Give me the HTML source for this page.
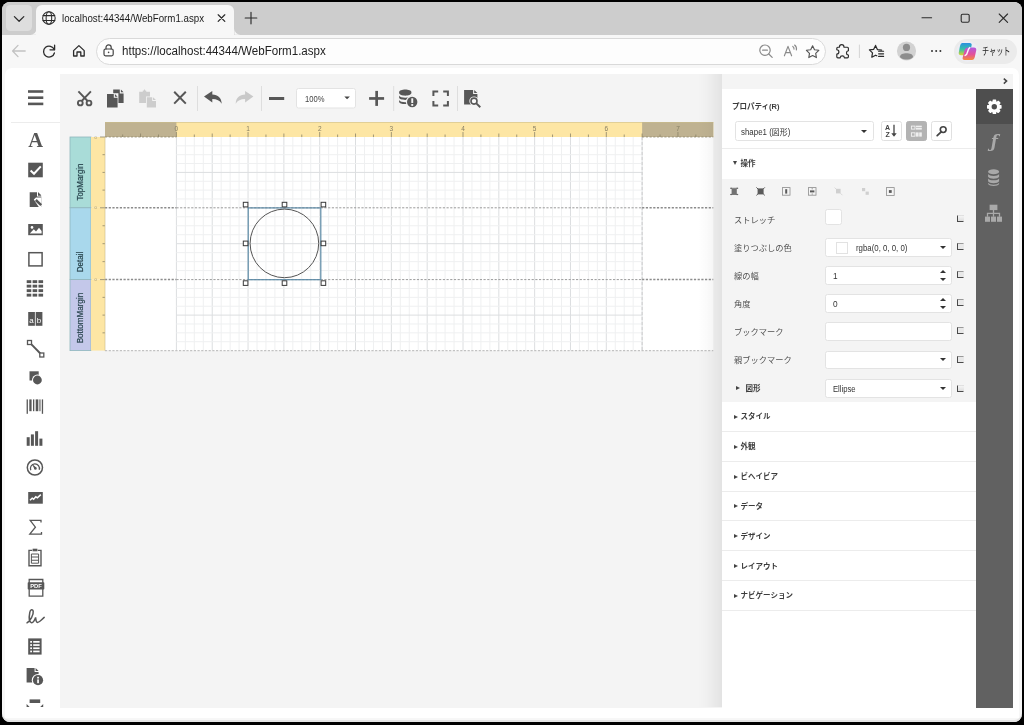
<!DOCTYPE html>
<html lang="ja">
<head>
<meta charset="utf-8">
<title>localhost:44344/WebForm1.aspx</title>
<style>
*{box-sizing:border-box;margin:0;padding:0}
html,body{width:1024px;height:725px;overflow:hidden;background:#000}
body{font-family:"Liberation Sans","Noto Sans CJK JP",sans-serif;color:#333;position:relative}
#win{position:absolute;left:2.4px;top:2.2px;width:1019.3px;height:719.5px;background:#f7f7f7;border-radius:8px;overflow:hidden;box-shadow:inset 0 -2px 0 #e4e4e4}
#stage{position:absolute;left:0;top:0;width:1024px;height:725px;overflow:hidden;will-change:transform;transform:translateZ(0)}
#stage *{position:absolute}
#stage svg *{position:static}
.t{white-space:nowrap;transform-origin:0 50%}
/* browser chrome */
#tabbar{left:2px;top:2px;width:1020px;height:32.7px;background:#cdcdcd;border-radius:8px 8px 0 0}
#tabdd{left:5.7px;top:4.8px;width:26.7px;height:26.2px;border-radius:4.5px;background:#dedede}
#tab{left:36px;top:5px;width:198.4px;height:29.8px;background:#f7f7f7;border-radius:6px 6px 0 0}
#tabtitle{left:62px;top:11px;font-size:11px;line-height:14px;color:#1b1b1b;transform:scaleX(.885)}
#addr{left:95.6px;top:38px;width:730px;height:27px;border-radius:13.5px;background:#fdfdfd;border:1px solid #d9d9d9}
#url{left:121.5px;top:44px;font-size:12px;line-height:14px;color:#222;transform:scaleX(.965)}
#chat{left:953.6px;top:39px;width:63.2px;height:24.8px;border-radius:12.4px;background:#ebebeb}
#chatt{left:982.2px;top:43.9px;font-size:10.5px;line-height:14px;color:#222;transform:scaleX(.68)}
/* page */
#page{left:5px;top:68px;width:1014px;height:650px;background:#fff;border-radius:7px 7px 0 0}
#main{left:59.6px;top:74px;width:662.4px;height:633.5px;background:#f4f4f4}
#lsep{left:11px;top:121.9px;width:49px;height:1px;background:#ececec}

.hb{font-size:7.5px;font-weight:bold;line-height:12px;color:#3c3c3c}
.lb{font-size:8.25px;line-height:12px;color:#505050}
.tx{font-size:8.25px;line-height:10px;color:#333}
.inp{background:#fff;border:1px solid #e3e3e3;border-radius:2.5px}
.btn{background:#fff;border:1px solid #e0e0e0;border-radius:2.5px}
.hl{height:1px;background:#ececec}
.arr{width:0;height:0;border-left:3.1px solid transparent;border-right:3.1px solid transparent;border-top:3.3px solid #333}
.arr.up{border-top:none;border-bottom:3.3px solid #333}
.tri.rt{width:0;height:0;border-top:2.6px solid transparent;border-bottom:2.6px solid transparent;border-left:4.2px solid #444}
.tri.dn{width:0;height:0;border-left:2.6px solid transparent;border-right:2.6px solid transparent;border-top:4.2px solid #444}
.mk{width:7px;height:7px;border:1px solid #4a4a4a;border-right-color:transparent;border-top-color:#999;background:#e8e8e8}
</style>
</head>
<body>
<div id="win"></div>
<div id="stage">
  <div id="tabbar"></div>
  <div id="tabdd"></div>
  <div id="tab"></div>
  <div id="tabtitle" class="t">localhost:44344/WebForm1.aspx</div>
  <div id="addr"></div>
  <div id="url" class="t">https://localhost:44344/WebForm1.aspx</div>
  <div id="chat"></div>
  <div id="chatt" class="t">チャット</div>
  <div id="page"></div>
  <div id="main"></div>
  <div id="lsep"></div>
  <!--DESIGNER-->
<svg id="dsg" width="1024" height="725" viewBox="0 0 1024 725" style="left:0;top:0">
<rect x="105.0" y="137.0" width="608.30" height="213.60" fill="#fff"/>
<g stroke-width="1"><path d="M176.40 137.0V350.60" stroke="#dcdee0"/><path d="M185.36 137.0V350.60" stroke="#eff0f1"/><path d="M194.31 137.0V350.60" stroke="#eff0f1"/><path d="M203.27 137.0V350.60" stroke="#eff0f1"/><path d="M212.23 137.0V350.60" stroke="#dcdee0"/><path d="M221.18 137.0V350.60" stroke="#eff0f1"/><path d="M230.14 137.0V350.60" stroke="#eff0f1"/><path d="M239.09 137.0V350.60" stroke="#eff0f1"/><path d="M248.05 137.0V350.60" stroke="#dcdee0"/><path d="M257.01 137.0V350.60" stroke="#eff0f1"/><path d="M265.96 137.0V350.60" stroke="#eff0f1"/><path d="M274.92 137.0V350.60" stroke="#eff0f1"/><path d="M283.88 137.0V350.60" stroke="#dcdee0"/><path d="M292.83 137.0V350.60" stroke="#eff0f1"/><path d="M301.79 137.0V350.60" stroke="#eff0f1"/><path d="M310.74 137.0V350.60" stroke="#eff0f1"/><path d="M319.70 137.0V350.60" stroke="#dcdee0"/><path d="M328.66 137.0V350.60" stroke="#eff0f1"/><path d="M337.61 137.0V350.60" stroke="#eff0f1"/><path d="M346.57 137.0V350.60" stroke="#eff0f1"/><path d="M355.52 137.0V350.60" stroke="#dcdee0"/><path d="M364.48 137.0V350.60" stroke="#eff0f1"/><path d="M373.44 137.0V350.60" stroke="#eff0f1"/><path d="M382.39 137.0V350.60" stroke="#eff0f1"/><path d="M391.35 137.0V350.60" stroke="#dcdee0"/><path d="M400.31 137.0V350.60" stroke="#eff0f1"/><path d="M409.26 137.0V350.60" stroke="#eff0f1"/><path d="M418.22 137.0V350.60" stroke="#eff0f1"/><path d="M427.18 137.0V350.60" stroke="#dcdee0"/><path d="M436.13 137.0V350.60" stroke="#eff0f1"/><path d="M445.09 137.0V350.60" stroke="#eff0f1"/><path d="M454.04 137.0V350.60" stroke="#eff0f1"/><path d="M463.00 137.0V350.60" stroke="#dcdee0"/><path d="M471.96 137.0V350.60" stroke="#eff0f1"/><path d="M480.91 137.0V350.60" stroke="#eff0f1"/><path d="M489.87 137.0V350.60" stroke="#eff0f1"/><path d="M498.83 137.0V350.60" stroke="#dcdee0"/><path d="M507.78 137.0V350.60" stroke="#eff0f1"/><path d="M516.74 137.0V350.60" stroke="#eff0f1"/><path d="M525.69 137.0V350.60" stroke="#eff0f1"/><path d="M534.65 137.0V350.60" stroke="#dcdee0"/><path d="M543.61 137.0V350.60" stroke="#eff0f1"/><path d="M552.56 137.0V350.60" stroke="#eff0f1"/><path d="M561.52 137.0V350.60" stroke="#eff0f1"/><path d="M570.48 137.0V350.60" stroke="#dcdee0"/><path d="M579.43 137.0V350.60" stroke="#eff0f1"/><path d="M588.39 137.0V350.60" stroke="#eff0f1"/><path d="M597.34 137.0V350.60" stroke="#eff0f1"/><path d="M606.30 137.0V350.60" stroke="#dcdee0"/><path d="M615.26 137.0V350.60" stroke="#eff0f1"/><path d="M624.21 137.0V350.60" stroke="#eff0f1"/><path d="M633.17 137.0V350.60" stroke="#eff0f1"/><path d="M642.12 137.0V350.60" stroke="#dcdee0"/><path d="M176.4 145.85H642.12" stroke="#eff0f1"/><path d="M176.4 154.70H642.12" stroke="#eff0f1"/><path d="M176.4 163.55H642.12" stroke="#eff0f1"/><path d="M176.4 172.40H642.12" stroke="#dcdee0"/><path d="M176.4 181.25H642.12" stroke="#eff0f1"/><path d="M176.4 190.10H642.12" stroke="#eff0f1"/><path d="M176.4 198.95H642.12" stroke="#eff0f1"/><path d="M176.4 216.78H642.12" stroke="#eff0f1"/><path d="M176.4 225.75H642.12" stroke="#eff0f1"/><path d="M176.4 234.73H642.12" stroke="#eff0f1"/><path d="M176.4 243.70H642.12" stroke="#dcdee0"/><path d="M176.4 252.68H642.12" stroke="#eff0f1"/><path d="M176.4 261.65H642.12" stroke="#eff0f1"/><path d="M176.4 270.62H642.12" stroke="#eff0f1"/><path d="M176.4 288.48H642.12" stroke="#eff0f1"/><path d="M176.4 297.35H642.12" stroke="#eff0f1"/><path d="M176.4 306.23H642.12" stroke="#eff0f1"/><path d="M176.4 315.10H642.12" stroke="#dcdee0"/><path d="M176.4 323.98H642.12" stroke="#eff0f1"/><path d="M176.4 332.85H642.12" stroke="#eff0f1"/><path d="M176.4 341.73H642.12" stroke="#eff0f1"/></g>
<path d="M642.12 137.0V350.60" stroke="#cdcdcd" stroke-width="1" stroke-dasharray="3 2"/>
<path d="M105.0 207.80H176.40M642.12 207.80H713.30" stroke="#8c8c8c" stroke-width="1.5" stroke-dasharray="2.2 1.5"/>
<path d="M176.4 207.80H642.12" stroke="#9a9a9a" stroke-width="1" stroke-dasharray="2.2 1.5"/>
<path d="M105.0 279.60H176.40M642.12 279.60H713.30" stroke="#8c8c8c" stroke-width="1.5" stroke-dasharray="2.2 1.5"/>
<path d="M176.4 279.60H642.12" stroke="#9a9a9a" stroke-width="1" stroke-dasharray="2.2 1.5"/>
<path d="M105.0 350.60H713.30" stroke="#c2c2c2" stroke-width="1.2" stroke-dasharray="2.2 1.5"/>
<rect x="105.0" y="122" width="608.30" height="15" fill="#fde6a4"/>
<rect x="105.0" y="122" width="71.40" height="15" fill="#bfb291"/>
<rect x="642.12" y="122" width="71.17" height="15" fill="#bfb291"/>
<path d="M105.0 122.5H713.3" stroke="#cbbd8b" stroke-width="1" opacity=".55"/>
<path d="M105.0 137H176.40M642.12 137H713.3" stroke="#8c8468" stroke-width="1.2" stroke-dasharray="2.2 1.5" opacity=".75"/>
<path d="M122.66 137v-2.5M140.57 137v-3.5M158.49 137v-2.5M176.40 137v-5M194.31 137v-2.5M212.23 137v-3.5M230.14 137v-2.5M248.05 137v-5M265.96 137v-2.5M283.88 137v-3.5M301.79 137v-2.5M319.70 137v-5M337.61 137v-2.5M355.52 137v-3.5M373.44 137v-2.5M391.35 137v-5M409.26 137v-2.5M427.18 137v-3.5M445.09 137v-2.5M463.00 137v-5M480.91 137v-2.5M498.83 137v-3.5M516.74 137v-2.5M534.65 137v-5M552.56 137v-2.5M570.48 137v-3.5M588.39 137v-2.5M606.30 137v-5M624.21 137v-2.5M642.12 137v-3.5M660.04 137v-2.5M677.95 137v-5M695.86 137v-2.5" stroke="#8c8468" stroke-width="1" opacity=".8"/>
<text x="176.4" y="131.2" font-size="6.5" fill="#857d63" text-anchor="middle" font-family="Liberation Sans, sans-serif">0</text>
<text x="248.1" y="131.2" font-size="6.5" fill="#857d63" text-anchor="middle" font-family="Liberation Sans, sans-serif">1</text>
<text x="319.7" y="131.2" font-size="6.5" fill="#857d63" text-anchor="middle" font-family="Liberation Sans, sans-serif">2</text>
<text x="391.4" y="131.2" font-size="6.5" fill="#857d63" text-anchor="middle" font-family="Liberation Sans, sans-serif">3</text>
<text x="463.0" y="131.2" font-size="6.5" fill="#857d63" text-anchor="middle" font-family="Liberation Sans, sans-serif">4</text>
<text x="534.6" y="131.2" font-size="6.5" fill="#857d63" text-anchor="middle" font-family="Liberation Sans, sans-serif">5</text>
<text x="606.3" y="131.2" font-size="6.5" fill="#857d63" text-anchor="middle" font-family="Liberation Sans, sans-serif">6</text>
<text x="678.0" y="131.2" font-size="6.5" fill="#857d63" text-anchor="middle" font-family="Liberation Sans, sans-serif">7</text>
<rect x="70" y="137.00" width="21" height="70.80" fill="#a9dcd8" stroke="#8fb7bd" stroke-width=".8"/>
<rect x="91" y="137.00" width="14" height="70.80" fill="#fde6a4"/>
<path d="M105 137.00h-5M105 154.70h-2.5M105 172.40h-2.5M105 190.10h-2.5" stroke="#8c8468" stroke-width="1" opacity=".8"/>
<text x="95.5" y="138.6" font-size="4" fill="#857d63" opacity=".85" text-anchor="middle" font-family="Liberation Sans, sans-serif">0</text>
<text transform="translate(82.8 200.5) rotate(-90)" font-size="8.8" fill="#27434c" stroke="#27434c" stroke-width=".2" font-family="Liberation Sans, sans-serif" textLength="37" lengthAdjust="spacingAndGlyphs">TopMargin</text>
<rect x="70" y="207.80" width="21" height="71.80" fill="#a9d8ec" stroke="#8fb7bd" stroke-width=".8"/>
<rect x="91" y="207.80" width="14" height="71.80" fill="#fde6a4"/>
<path d="M105 207.80h-5M105 225.75h-2.5M105 243.70h-2.5M105 261.65h-2.5" stroke="#8c8468" stroke-width="1" opacity=".8"/>
<text x="95.5" y="209.4" font-size="4" fill="#857d63" opacity=".85" text-anchor="middle" font-family="Liberation Sans, sans-serif">0</text>
<text transform="translate(82.8 272.3) rotate(-90)" font-size="8.8" fill="#27434c" stroke="#27434c" stroke-width=".2" font-family="Liberation Sans, sans-serif" textLength="20.5" lengthAdjust="spacingAndGlyphs">Detail</text>
<rect x="70" y="279.60" width="21" height="71.00" fill="#c4c8ea" stroke="#8fb7bd" stroke-width=".8"/>
<rect x="91" y="279.60" width="14" height="71.00" fill="#fde6a4"/>
<path d="M105 279.60h-5M105 297.35h-2.5M105 315.10h-2.5M105 332.85h-2.5" stroke="#8c8468" stroke-width="1" opacity=".8"/>
<text x="95.5" y="281.2" font-size="4" fill="#857d63" opacity=".85" text-anchor="middle" font-family="Liberation Sans, sans-serif">0</text>
<text transform="translate(82.8 343.3) rotate(-90)" font-size="8.8" fill="#27434c" stroke="#27434c" stroke-width=".2" font-family="Liberation Sans, sans-serif" textLength="50.5" lengthAdjust="spacingAndGlyphs">BottomMargin</text>
<path d="M105 137V350.60" stroke="#c9b98a" stroke-width="1" opacity=".6"/>
<rect x="248.2" y="207.9" width="72.60" height="71.80" fill="none" stroke="#5c8aa6" stroke-width="1.2"/>
<circle cx="284.4" cy="243.4" r="34.3" fill="none" stroke="#555" stroke-width="1"/>
<rect x="243.30" y="202.30" width="4.6" height="4.6" fill="#fff" stroke="#3a3a3a" stroke-width="1"/><rect x="282.20" y="202.30" width="4.6" height="4.6" fill="#fff" stroke="#3a3a3a" stroke-width="1"/><rect x="321.10" y="202.30" width="4.6" height="4.6" fill="#fff" stroke="#3a3a3a" stroke-width="1"/><rect x="243.30" y="241.10" width="4.6" height="4.6" fill="#fff" stroke="#3a3a3a" stroke-width="1"/><rect x="321.10" y="241.10" width="4.6" height="4.6" fill="#fff" stroke="#3a3a3a" stroke-width="1"/><rect x="243.30" y="280.80" width="4.6" height="4.6" fill="#fff" stroke="#3a3a3a" stroke-width="1"/><rect x="282.20" y="280.80" width="4.6" height="4.6" fill="#fff" stroke="#3a3a3a" stroke-width="1"/><rect x="321.10" y="280.80" width="4.6" height="4.6" fill="#fff" stroke="#3a3a3a" stroke-width="1"/>
</svg>
<!--/DESIGNER-->
  <!--TOOLBAR-->
<svg id="tb" width="1024" height="725" viewBox="0 0 1024 725" style="left:0;top:0">
<g fill="#575757" stroke="none">
<!-- hamburger -->
<rect x="28" y="90.2" width="15.3" height="2.6"/><rect x="28" y="96.4" width="15.3" height="2.6"/><rect x="28" y="102.6" width="15.3" height="2.6"/>
<!-- scissors -->
<g fill="none" stroke="#575757" stroke-width="1.9">
<circle cx="80.3" cy="103" r="2.4"/><circle cx="89" cy="103" r="2.4"/>
<path d="M78.4 91.4L87.6 101M90.9 91.4L81.7 101" stroke-linecap="butt"/>
</g>
<!-- copy -->
<path d="M113.2 89.6h6.6v3.8h3.8v9.6h-10.4zM120.9 89.6l2.7 2.7h-2.7z"/>
<path d="M106.4 93.2h12v14.8h-12z" fill="#f4f4f4"/><path d="M107 94h6.8v3.8h3.8v9.6H107zM114.9 94l2.7 2.7h-2.7z"/>
<!-- paste (disabled) -->
<g fill="#cdcdcd">
<path d="M139.2 91.8h3.6v-1.4h3.4v1.4h3.8v4.6h-4v6.6h-6.8zM144 89.4h1v1.4h-1z"/>
<path d="M146.8 97.2h5.4v3.8h3.8v6.4h-9.2zM153 97.2l3 2.8h-3z"/>
</g>
<!-- X -->
<path d="M174.2 91.8L185.8 103.6M185.8 91.8L174.2 103.6" fill="none" stroke="#575757" stroke-width="2"/>
<!-- undo -->
<path d="M204 96.6l8.3-5.6v3.6c5.6 .2 9.2 3.4 9.4 9.2c-2-3.4-4.8-4.8-9.4-4.8v3.6z"/>
<!-- redo (disabled) -->
<path d="M253.4 96.6l-8.3-5.6v3.6c-5.6 .2-9.2 3.4-9.4 9.2c2-3.4 4.8-4.8 9.4-4.8v3.6z" fill="#c9c9c9"/>
<!-- minus -->
<rect x="269" y="97" width="15.2" height="3"/>
<!-- plus -->
<rect x="369.1" y="97.1" width="15" height="2.7"/><rect x="375.3" y="90.9" width="2.7" height="15"/>
<!-- db with warning -->
<path d="M399.1 92.3c0-3.6 12.3-3.6 12.3 0v.8c0 3.4-12.3 3.4-12.3 0z"/>
<path d="M399.1 95.6c1.2 2.9 11.1 2.9 12.3 0v2c0 3.2-12.3 3.2-12.3 0z"/>
<path d="M399.1 100.1c1.2 2.9 11.1 2.9 12.3 0v1.6c0 3.2-12.3 3.2-12.3 0z"/>
<circle cx="412.2" cy="102" r="6.3" fill="#f4f4f4"/>
<circle cx="412.2" cy="102" r="5.2"/>
<rect x="411.3" y="98.3" width="1.9" height="4.7" fill="#f4f4f4"/><rect x="411.3" y="104" width="1.9" height="1.9" fill="#f4f4f4"/>
<!-- fullscreen -->
<path d="M433.4 96v-4.4h4.8M443.2 91.6h4.7v4.4M447.9 101v4.4h-4.7M438.2 105.4h-4.8v-4.4" fill="none" stroke="#575757" stroke-width="2"/>
<!-- preview -->
<path d="M464.1 89.9h9v4.2h4.3v10.5h-13.3zM474.2 89.9l3.2 3.2h-3.2z"/>
<path d="M474 101.1l6.2 6" fill="none" stroke="#f4f4f4" stroke-width="4.2"/>
<circle cx="474" cy="101.1" r="4.7" fill="#f4f4f4"/>
<circle cx="474" cy="101.1" r="3" fill="#fafafa" stroke="#575757" stroke-width="1.6"/>
<path d="M476.3 103.4l4 3.8" fill="none" stroke="#575757" stroke-width="1.9"/>
</g>
<!-- separators -->
<g fill="#dedede"><rect x="197" y="86" width="1" height="25"/><rect x="261" y="86" width="1" height="25"/><rect x="393.2" y="86" width="1" height="25"/><rect x="457" y="86" width="1" height="25"/></g>
<!-- zoom box -->
<rect x="296.5" y="88.5" width="59" height="19.5" rx="2" fill="#fff" stroke="#e3e3e3"/>
<text x="305" y="101.6" font-size="8.2" fill="#444" font-family="Liberation Sans, sans-serif" textLength="19.5" lengthAdjust="spacingAndGlyphs">100%</text>
<path d="M344.3 96.4h5.6l-2.8 2.9z" fill="#444"/>
</svg>

<!--/TOOLBAR-->
  <!--LEFTBAR-->
<svg id="lb" width="70" height="725" viewBox="0 0 70 725" style="left:0;top:0">
<g fill="#575757">
<!-- A label -->
<text x="35.6" y="147.3" font-size="20.5" font-weight="bold" text-anchor="middle" font-family="Liberation Serif, serif" fill="#575757">A</text>
<!-- checkbox -->
<rect x="28.2" y="162.7" width="14.6" height="14.6"/>
<path d="M30.6 170.6l3.4 3.2l6.8-7.4" fill="none" stroke="#fff" stroke-width="2"/>
<!-- rich text -->
<path d="M29.7 192.2h7.3v4.2h4.3v10.5H29.7zM38 192.2l3.3 3.2h-3.3z"/>
<path d="M33.8 199.6l2.2-2h5.4v9.4h-2.6z" fill="#fff"/>
<path d="M35.8 200l5.4 5.2" fill="none" stroke="#575757" stroke-width="2.5"/>
<path d="M38 192.2l3.3 3.2h-3.3z"/>
<!-- picture -->
<path d="M28.2 224h14.6v11.2H28.2z"/>
<path d="M29.8 233.6l4-4.4l2.2 2.2l3-3.6l2.6 3.2v2.6z" fill="#fff"/><circle cx="32" cy="227.4" r="1.3" fill="#fff"/>
<!-- panel -->
<rect x="28.9" y="252.7" width="13.2" height="13.2" fill="none" stroke="#575757" stroke-width="1.5"/>
<!-- table -->
<g>
<rect x="26.7" y="280.2" width="4.6" height="2.9"/><rect x="32.6" y="280.2" width="4.6" height="2.9"/><rect x="38.5" y="280.2" width="4.6" height="2.9"/>
<rect x="26.7" y="284.7" width="4.6" height="2.9"/><rect x="32.6" y="284.7" width="4.6" height="2.9"/><rect x="38.5" y="284.7" width="4.6" height="2.9"/>
<rect x="26.7" y="289.2" width="4.6" height="2.9"/><rect x="32.6" y="289.2" width="4.6" height="2.9"/><rect x="38.5" y="289.2" width="4.6" height="2.9"/>
<rect x="26.7" y="293.7" width="4.6" height="2.9"/><rect x="32.6" y="293.7" width="4.6" height="2.9"/><rect x="38.5" y="293.7" width="4.6" height="2.9"/>
</g>
<!-- character comb -->
<rect x="28.2" y="312" width="6.7" height="13.8"/><rect x="35.7" y="312" width="6.7" height="13.8"/>
<text x="31.5" y="323.2" font-size="8" text-anchor="middle" fill="#fff" font-family="Liberation Sans, sans-serif">a</text>
<text x="39.1" y="323.2" font-size="8" text-anchor="middle" fill="#fff" font-family="Liberation Sans, sans-serif">b</text>
<!-- line -->
<path d="M29.5 342.4L41.8 355" fill="none" stroke="#575757" stroke-width="1.9"/>
<rect x="27.5" y="340.5" width="4" height="4" fill="#fff" stroke="#575757" stroke-width="1.3"/>
<rect x="39.8" y="353" width="4" height="4" fill="#fff" stroke="#575757" stroke-width="1.3"/>
<!-- shape -->
<path d="M29.5 371.3h9.2v9.2h-9.2z"/>
<circle cx="37.4" cy="380" r="5.4" fill="#fff"/><circle cx="37.4" cy="380" r="4.4"/>
<!-- barcode -->
<rect x="26.6" y="399.4" width="1.3" height="14.4"/><rect x="29.3" y="399.4" width="2.3" height="11.8"/><rect x="33" y="399.4" width="1.3" height="11.8"/><rect x="35.7" y="399.4" width="2.6" height="11.8"/><rect x="39.4" y="399.4" width="1.1" height="11.8"/><rect x="41.8" y="399.4" width="1.3" height="14.4"/>
<!-- chart -->
<rect x="26.7" y="437.2" width="3" height="8.6"/><rect x="30.9" y="434.4" width="3" height="11.4"/><rect x="35.1" y="431.2" width="3" height="14.6"/><rect x="39.4" y="438.6" width="3" height="7.2"/>
<!-- gauge -->
<circle cx="34.9" cy="467.5" r="7.6" fill="none" stroke="#575757" stroke-width="1.5"/>
<path d="M30.8 470.2a4.5 4.5 0 1 1 8.4-.4" fill="none" stroke="#575757" stroke-width="1.3"/>
<path d="M31.6 463.6l4.6 4l-1.6 1.6z"/><circle cx="35.4" cy="468.4" r="1.3"/>
<!-- sparkline -->
<rect x="28.2" y="492" width="14.6" height="11.7"/>
<path d="M30 500.2l2.2-2l1.4 1l2.2-2.4l1.6 1l3.4-3.2" fill="none" stroke="#fff" stroke-width="1.5"/>
<!-- sigma -->
<path d="M41 522.6v-2.2H30.2l5.2 6.8l-5.6 7H41.5v-2.2" fill="none" stroke="#575757" stroke-width="1.3"/>
<!-- subreport clipboard -->
<path d="M32.2 550.4h-3.2v15.4h12v-15.4h-3.2" fill="none" stroke="#575757" stroke-width="1.4"/>
<rect x="32.6" y="548.7" width="4.8" height="2.6"/>
<path d="M31.4 554h7.2v9.2h-7.2z" fill="none" stroke="#575757" stroke-width="1"/>
<path d="M31.4 557h7.2M31.4 560.2h7.2" stroke="#575757" stroke-width="1.1"/>
<!-- pdf -->
<path d="M29.2 583v-3.5h13.6v3.5" fill="none" stroke="#575757" stroke-width="1.3"/>
<rect x="27.7" y="582.2" width="16.6" height="7.4" rx=".8"/>
<path d="M29.2 589v7.2h13.6v-7.2" fill="none" stroke="#575757" stroke-width="1.3"/>
<text x="36" y="588.3" font-size="6" font-weight="bold" text-anchor="middle" fill="#fff" font-family="Liberation Sans, sans-serif" textLength="11.6" lengthAdjust="spacingAndGlyphs">PDF</text>
<!-- signature -->
<path d="M27 622.8C30 621.2 33.8 615 33.2 611.4C32.8 608.8 30.4 609.2 29.8 612.4C29 616.6 29.2 621.8 31.2 622.6C33 623.2 34.6 620.4 35.6 617.4C36 619.6 35.8 622.2 37.4 622.4C39.2 622.6 41.4 619.6 44.2 617.4" fill="none" stroke="#575757" stroke-width="1.5" stroke-linecap="round"/>
<!-- TOC -->
<rect x="28.2" y="638.4" width="13.4" height="16.2"/>
<g fill="#fff"><rect x="30.2" y="641" width="1.8" height="1.7"/><rect x="33.2" y="641" width="6.4" height="1.7"/><rect x="30.2" y="644.2" width="1.8" height="1.7"/><rect x="33.2" y="644.2" width="6.4" height="1.7"/><rect x="30.2" y="647.4" width="1.8" height="1.7"/><rect x="33.2" y="647.4" width="6.4" height="1.7"/><rect x="30.2" y="650.6" width="1.8" height="1.7"/><rect x="33.2" y="650.6" width="6.4" height="1.7"/></g>
<!-- page info -->
<path d="M26.6 667.9h8v4h4v10.6h-12zM35.6 667.9l3 3h-3z"/>
<circle cx="38" cy="680.2" r="6.2" fill="#fff"/><circle cx="38" cy="680.2" r="5.1"/>
<rect x="37.2" y="679.4" width="1.7" height="3.8" fill="#fff"/><rect x="37.2" y="676.8" width="1.7" height="1.7" fill="#fff"/>
<!-- page break (clipped) -->
<rect x="29.6" y="699.4" width="10.6" height="3.6"/>
<path d="M26.6 704v3h3zM43.2 704v3h-3z"/>
</g>
</svg>

<!--/LEFTBAR-->
  <!--RIGHT-->
<div id="rshadow" style="left:698px;top:74px;width:24px;height:633px;background:linear-gradient(to right,rgba(0,0,0,0),rgba(0,0,0,.018) 40%,rgba(0,0,0,.068))"></div>
<div id="rpanel" style="left:722px;top:74px;width:254px;height:633.5px;background:#fff"></div>
<div id="rtop" style="left:722px;top:74px;width:291px;height:14.5px;background:#f4f4f4"></div>
<div id="rstrip" style="left:976px;top:88.5px;width:37px;height:619px;background:#616161"></div>
<div id="rsel" style="left:976px;top:88.5px;width:37px;height:35.5px;background:#4e4e4e"></div>
<div class="t hb" style="left:732px;top:100.9px">プロパティ(R)</div>
<div class="inp" style="left:734.5px;top:121.2px;width:139px;height:20px"></div>
<div class="t tx" style="left:741px;top:127.8px;transform:scaleX(.96)">shape1 (図形)</div>
<div class="arr" style="left:861.3px;top:129.8px"></div>
<div class="btn" style="left:881px;top:121.2px;width:20.5px;height:20px"></div>
<div class="btn" style="left:906px;top:121.2px;width:20.5px;height:20px;background:#b3b3b3;border-color:#b3b3b3"></div>
<div class="btn" style="left:931.4px;top:121.2px;width:20.5px;height:20px"></div>
<div class="hl" style="left:722px;top:148px;width:254px"></div>
<div class="tri dn" style="left:733.4px;top:161px"></div>
<div class="t hb" style="left:740.4px;top:158.3px">操作</div>
<div style="left:722px;top:179.3px;width:254px;height:222.5px;background:#f4f4f4"></div>
<div class="inp" style="left:825px;top:209.4px;width:16.6px;height:15.6px"></div>
<div class="t lb" style="left:734px;top:214.8px">ストレッチ</div>
<div class="mk" style="left:957px;top:215.4px;border-top-color:transparent;background:linear-gradient(#f4f4f4,#dedede)"></div>
<div class="inp" style="left:825px;top:238.2px;width:127px;height:18.8px"></div>
<div class="t lb" style="left:734px;top:243.0px">塗りつぶしの色</div>
<div style="left:835.7px;top:241.6px;width:12.7px;height:12.7px;background:#fff;border:1px solid #e2e2e2"></div>
<div class="t tx" style="left:856px;top:244.1px;transform:scaleX(.95)">rgba(0, 0, 0, 0)</div>
<div class="arr" style="left:939.6px;top:246.0px"></div>
<div class="mk" style="left:957px;top:243.2px"></div>
<div class="inp" style="left:825px;top:266.2px;width:127px;height:18.8px"></div>
<div class="t lb" style="left:734px;top:271.0px">線の幅</div>
<div class="t tx" style="left:833px;top:272.1px">1</div>
<div class="arr up" style="left:939.8px;top:270.0px"></div>
<div class="arr" style="left:939.8px;top:278.2px"></div>
<div class="mk" style="left:957px;top:271.2px"></div>
<div class="inp" style="left:825px;top:294.1px;width:127px;height:18.8px"></div>
<div class="t lb" style="left:734px;top:298.9px">角度</div>
<div class="t tx" style="left:833px;top:300.0px">0</div>
<div class="arr up" style="left:939.8px;top:297.9px"></div>
<div class="arr" style="left:939.8px;top:306.1px"></div>
<div class="mk" style="left:957px;top:299.1px"></div>
<div class="inp" style="left:825px;top:322.3px;width:127px;height:18.8px"></div>
<div class="t lb" style="left:734px;top:327.1px">ブックマーク</div>
<div class="mk" style="left:957px;top:327.3px"></div>
<div class="inp" style="left:825px;top:350.6px;width:127px;height:18.8px"></div>
<div class="t lb" style="left:734px;top:355.4px">親ブックマーク</div>
<div class="arr" style="left:939.6px;top:358.4px"></div>
<div class="mk" style="left:957px;top:355.6px"></div>
<div class="inp" style="left:825px;top:379.2px;width:127px;height:18.8px"></div>
<div class="tri rt" style="left:735.6px;top:386.0px"></div>
<div class="t hb" style="left:745.6px;top:383.0px">図形</div>
<div class="t tx" style="left:832.6px;top:385.1px;transform:scaleX(.93)">Ellipse</div>
<div class="arr" style="left:939.6px;top:387.0px"></div>
<div class="mk" style="left:957px;top:384.6px;border-top-color:transparent;background:linear-gradient(#f4f4f4,#dedede)"></div>
<div class="tri rt" style="left:733.8px;top:415.0px"></div>
<div class="t hb" style="left:740.6px;top:411.4px">スタイル</div>
<div class="hl" style="left:722px;top:430.9px;width:254px"></div>
<div class="tri rt" style="left:733.8px;top:444.8px"></div>
<div class="t hb" style="left:740.6px;top:441.2px">外観</div>
<div class="hl" style="left:722px;top:460.8px;width:254px"></div>
<div class="tri rt" style="left:733.8px;top:474.5px"></div>
<div class="t hb" style="left:740.6px;top:470.9px">ビヘイビア</div>
<div class="hl" style="left:722px;top:490.5px;width:254px"></div>
<div class="tri rt" style="left:733.8px;top:504.3px"></div>
<div class="t hb" style="left:740.6px;top:500.8px">データ</div>
<div class="hl" style="left:722px;top:520.4px;width:254px"></div>
<div class="tri rt" style="left:733.8px;top:534.2px"></div>
<div class="t hb" style="left:740.6px;top:530.6px">デザイン</div>
<div class="hl" style="left:722px;top:550.3px;width:254px"></div>
<div class="tri rt" style="left:733.8px;top:564.1px"></div>
<div class="t hb" style="left:740.6px;top:560.5px">レイアウト</div>
<div class="hl" style="left:722px;top:580.1px;width:254px"></div>
<div class="tri rt" style="left:733.8px;top:593.9px"></div>
<div class="t hb" style="left:740.6px;top:590.2px">ナビゲーション</div>
<div class="hl" style="left:722px;top:609.8px;width:254px"></div>
<!--/RIGHT-->
  <!--RICONS-->
<svg id="ri" width="1024" height="725" viewBox="0 0 1024 725" style="left:0;top:0">
<!-- collapse chevron -->
<path d="M1003.8 78.6l2.8 2.5l-2.8 2.5" fill="none" stroke="#444" stroke-width="1.5"/>
<!-- gear -->
<g transform="translate(994.3 106.8)" fill="#fff">
<circle r="5.9"/>
<g><rect x="-1.7" y="-7.3" width="3.6" height="14.6" rx=".6"/><rect x="-1.7" y="-7.3" width="3.6" height="14.6" rx=".6" transform="rotate(45)"/><rect x="-1.7" y="-7.3" width="3.6" height="14.6" rx=".6" transform="rotate(90)"/><rect x="-1.7" y="-7.3" width="3.6" height="14.6" rx=".6" transform="rotate(135)"/></g>
<circle r="2.7" fill="#4e4e4e"/>
</g>
<!-- f -->
<text x="994.2" y="146.6" font-size="16.5" font-style="italic" font-weight="bold" text-anchor="middle" fill="#a9a9a9" font-family="DejaVu Serif, serif">ƒ</text>
<!-- db -->
<g fill="#a9a9a9">
<ellipse cx="993.6" cy="171.8" rx="5.5" ry="2.5"/>
<path d="M988.1 174c1 2.6 10 2.6 11 0v2.8c-1 2.6-10 2.6-11 0zM988.1 178.4c1 2.6 10 2.6 11 0v2.8c-1 2.6-10 2.6-11 0zM988.1 182.8c1 2.6 10 2.6 11 0v1.2c-1 2.6-10 2.6-11 0z"/>
<!-- hierarchy -->
<rect x="989.6" y="204.7" width="7.8" height="5.4"/>
<rect x="985" y="216.6" width="5" height="5.2"/><rect x="991" y="216.6" width="5" height="5.2"/><rect x="997" y="216.6" width="5" height="5.2"/>
<path d="M993.5 210v3.4M987.5 216.8v-3.4h12v3.4M993.5 213.4v3.4" fill="none" stroke="#a9a9a9" stroke-width="1.3"/>
</g>
<!-- AZ sort -->
<g fill="#444" font-family="Liberation Sans, sans-serif" font-weight="bold" font-size="7">
<text x="887.6" y="130" text-anchor="middle">A</text><text x="887.6" y="137.2" text-anchor="middle">Z</text>
</g>
<path d="M894 124.8v10.4" fill="none" stroke="#444" stroke-width="1.3"/><path d="M891.3 133.2h5.4l-2.7 3.5z" fill="#444"/>
<!-- categories -->
<g fill="none" stroke="#fff" stroke-width=".9" opacity=".85"><rect x="911.4" y="126.1" width="3.6" height="3"/><rect x="911.4" y="132.8" width="3.6" height="3.4"/></g>
<g fill="#fff" opacity=".8"><rect x="916" y="125.7" width="5.8" height="1.6"/><rect x="916" y="128" width="5.8" height="1.6"/><rect x="916" y="132.4" width="2.6" height="4.2"/><rect x="919.2" y="132.4" width="2.6" height="4.2"/></g>
<!-- search -->
<circle cx="943.2" cy="129.6" r="2.9" fill="none" stroke="#444" stroke-width="1.6"/><path d="M941.2 131.8l-4 3.8" fill="none" stroke="#444" stroke-width="1.8" stroke-linecap="round"/>
<!-- small action icons -->
<g fill="#5a5a5a" stroke="none">
<!-- 1 -->
<rect x="731.6" y="188.8" width="5.2" height="5.2" opacity=".85"/><path d="M730.2 188.3h8M730.2 194.5h8M731.2 187.6v1.4M737.2 187.6v1.4M731.2 193.8v1.4M737.2 193.8v1.4" stroke="#5a5a5a" stroke-width=".8"/>
<!-- 2 -->
<rect x="757.6" y="188.4" width="6" height="6"/><path d="M756.4 187.4l1.6 1.6M764.8 187.4l-1.6 1.6M756.4 195.4l1.6-1.6M764.8 195.4l-1.6-1.6" stroke="#5a5a5a" stroke-width="1"/>
<!-- 3 -->
<rect x="782.4" y="187.6" width="7.6" height="7.6" fill="none" stroke="#8c8c8c" stroke-width=".8"/><rect x="785.2" y="189.2" width="2" height="4.4"/>
<!-- 4 -->
<rect x="808.4" y="187.6" width="7.6" height="7.6" fill="none" stroke="#8c8c8c" stroke-width=".8"/><rect x="810" y="190.4" width="4.4" height="2"/><path d="M812.2 188v1.4M812.2 193.4v1.4" stroke="#8c8c8c" stroke-width=".8"/>
<!-- 5,6 disabled -->
<g fill="#cfcfcf"><rect x="836" y="188.8" width="4.6" height="4.6"/><path d="M834.6 187.6l1.6 1.6M840.4 193.2l2 2" stroke="#d6d6d6" stroke-width=".9"/>
<rect x="862" y="188" width="3.2" height="3.2"/><rect x="865.6" y="191.6" width="3.2" height="3.2"/></g>
<!-- 7 -->
<rect x="886.4" y="187.6" width="7.8" height="7.8" fill="none" stroke="#8c8c8c" stroke-width=".8"/><rect x="888.9" y="190.1" width="2.8" height="2.8"/>
</g>
</svg>

<!--/RICONS-->
<!--CHROMEICONS-->
<svg id="ch" width="1024" height="70" viewBox="0 0 1024 70" style="left:0;top:0">
<!-- tab feet -->
<path d="M30.5 34.7h6v-6a6 6 0 0 1-6 6zM240.4 34.7h-6v-6a6 6 0 0 0 6 6z" fill="#f7f7f7"/>
<g fill="none" stroke="#2b2b2b" stroke-width="1.25" stroke-linecap="round" stroke-linejoin="round">
<!-- chevron -->
<path d="M14.4 16.6l4.7 4.7l4.7-4.7"/>
<!-- globe -->
<g stroke-width="1.05"><circle cx="48.9" cy="18" r="6.3"/><ellipse cx="48.9" cy="18" rx="2.8" ry="6.3"/><path d="M43 15.6h11.8M43 20.4h11.8"/></g>
<!-- tab close -->
<path d="M218.2 14.8l6.6 6.6M224.8 14.8l-6.6 6.6"/>
<!-- new tab plus -->
<path d="M245.2 18h11.6M251 12.2v11.6" stroke-width="1.15"/>
<!-- window controls -->
<path d="M922 17.8h9.6" stroke-width="1.1"/>
<rect x="961.2" y="14.2" width="8" height="8" rx="1.4" stroke-width="1.1"/>
<path d="M999.2 14l8.4 8.4M1007.6 14l-8.4 8.4" stroke-width="1.1"/>
<!-- back (disabled) -->
<path d="M25.2 51H12.8M18 45.4L12.6 51l5.4 5.6" stroke="#c2c2c2" stroke-width="1.3"/>
<!-- refresh -->
<path d="M54.2 49.6a5.5 5.5 0 1 0 .2 3.4" stroke-width="1.3"/>
<path d="M54.6 45.2v4.6h-4.6" stroke-width="1.3"/>
<!-- home -->
<path d="M73.6 50.6l5.3-5l5.3 5v5.4h-3.4v-4h-3.8v4h-3.4z" stroke-width="1.3"/>
<!-- lock -->
<rect x="104" y="49" width="9.2" height="6.8" rx="1.5" stroke-width="1.2" stroke="#444"/>
<path d="M106 49v-1.6a2.6 2.6 0 0 1 5.2 0v1.6" stroke-width="1.2" stroke="#444"/>
<circle cx="108.6" cy="52.4" r=".8" fill="#444" stroke="none"/>
<!-- zoom out -->
<g stroke="#8a8a8a" stroke-width="1.2"><circle cx="765" cy="50.2" r="5.2"/><path d="M762.6 50.2h4.8M768.8 54l3.4 3.4"/></g>
<!-- read aloud -->
<g stroke="#8a8a8a" stroke-width="1.15"><path d="M784.4 55.8l3.6-9.4l3.6 9.4M785.6 52.6h4.8"/><path d="M792.8 46.4c1 .6 1.4 1.6 1.2 2.8M794.6 45c1.6 1.2 2.2 3 1.8 5"/></g>
<!-- star -->
<path d="M812.6 45.8l1.9 3.9l4.3 .6l-3.1 3l.7 4.3l-3.8-2l-3.8 2l.7-4.3l-3.1-3l4.3-.6z" stroke="#555" stroke-width="1.15"/>
<!-- extensions puzzle -->
<path d="M839.4 47.2c0-3.4 4.6-3.4 4.6 0h3.4c.6 0 1 .4 1 1v2.6c-2.6 .2-2.6 4 0 4.2v1.8c0 .6-.4 1-1 1h-3c-.2-2.6-4-2.6-4.2 0h-2.4c-.6 0-1-.4-1-1v-2.8c2.8-.2 2.8-4 0-4.2v-1.6c0-.6 .4-1 1-1z" stroke-width="1.15"/>
<!-- favorites -->
<path d="M875.6 45.8l1.8 3.8l4.2 .6M876.8 55.8l-1.2-.6l-3.8 2l.7-4.3l-3.1-3l4.3-.6l1.9-3.9" stroke-width="1.25"/>
<path d="M878.6 51.2h5M878.6 53.8h5M878.6 56.4h5" stroke-width="1.15"/>
</g>
<path d="M859.4 44.6v13.4" stroke="#d4d4d4" stroke-width="1"/>
<!-- profile -->
<circle cx="906.5" cy="51" r="9.6" fill="#d2d2d2"/>
<circle cx="906.5" cy="47.4" r="3.6" fill="#8d8d8d"/>
<path d="M900 56.6c0-4.6 13-4.6 13 0c0 1.6-2.8 3-6.5 3s-6.5-1.4-6.5-3z" fill="#8d8d8d"/>
<!-- dots -->
<g fill="#333"><circle cx="932" cy="51" r="1"/><circle cx="936.2" cy="51" r="1"/><circle cx="940.4" cy="51" r="1"/></g>
<!-- copilot -->
<defs>
<linearGradient id="cg1" x1="0" y1="0" x2="0" y2="1"><stop offset="0" stop-color="#2a8fe0"/><stop offset=".5" stop-color="#35c0a8"/><stop offset="1" stop-color="#d6d532"/></linearGradient>
<linearGradient id="cg2" x1="0" y1="0" x2="0" y2="1"><stop offset="0" stop-color="#b15ae0"/><stop offset=".55" stop-color="#e3509a"/><stop offset="1" stop-color="#f58a3c"/></linearGradient>
</defs>
<ellipse cx="967.4" cy="51.4" rx="11" ry="10.4" fill="#eceef8" opacity=".7"/>
<path d="M962.2 43h7.4q2.6 0 2 2.5l-1.7 7.2q-.6 2.5-3.1 2.5h-5.6q-3 0-2.4-3l1.2-6.2q.6-3 2.2-3z" fill="url(#cg1)"/>
<path d="M968.4 47.4h5.4q3 0 2.4 3l-1.4 6.6q-.6 3-2.8 3h-7.4q-2.5 0-1.9-2.5l1.9-7.6q.6-2.5 3.8-2.5z" fill="url(#cg2)"/>
<path d="M969.8 47.6c-1.4 .8-1.8 2.4-2.2 4.2c-.4 1.8-.8 3-2.4 3.6" fill="none" stroke="#fff" stroke-width="1.5" stroke-linecap="round" opacity=".95"/>
</svg>

<!--/CHROMEICONS-->
</div>
</body>
</html>
